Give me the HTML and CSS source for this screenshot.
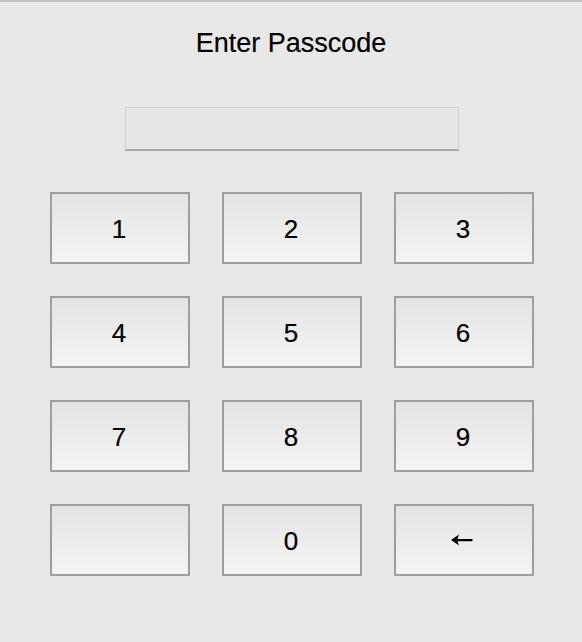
FILE: index.html
```html
<!DOCTYPE html>
<html>
<head>
<meta charset="utf-8">
<link rel="stylesheet" href="styles.css">
</head>
<body>
<div class="screen">
  <h1 class="title">Enter Passcode</h1>
  <div class="field-row"><div class="field"></div></div>
  <div class="pad">
    <button class="key">1</button>
    <button class="key">2</button>
    <button class="key">3</button>
    <button class="key">4</button>
    <button class="key">5</button>
    <button class="key">6</button>
    <button class="key">7</button>
    <button class="key">8</button>
    <button class="key">9</button>
    <button class="key"></button>
    <button class="key">0</button>
    <button class="key key-back" aria-label="Backspace"><svg class="arrow" width="22" height="12" viewBox="0 0 22 12"><path d="M0 6 L8 0.5 L6.5 5 H21.5 V7.2 H6.5 L8 11.5 Z" fill="#000"/></svg></button>
  </div>
</div>
</body>
</html>
```
FILE: styles.css
```css
html, body {
  margin: 0;
  padding: 0;
  background: #e8e8e8;
}
.screen {
  width: 582px;
  height: 642px;
  box-sizing: border-box;
  border-top: 2px solid #c4c4c4;
  font-family: "Liberation Sans", Arial, sans-serif;
  color: #000;
}
.title {
  margin: 26px 0 0 0;
  font-size: 27px;
  line-height: 30px;
  font-weight: normal;
  text-align: center;
  -webkit-text-stroke: 0.2px #000;
}
.field-row {
  display: flex;
  justify-content: center;
  padding-left: 1px;
  margin-top: 49px;
}
.field {
  width: 334px;
  height: 44px;
  box-sizing: border-box;
  border: 1px solid #cbcbcb;
  border-bottom: 2px solid #a9a9a9;
  background: #e7e7e7;
}
.pad {
  display: grid;
  grid-template-columns: repeat(3, 140px);
  grid-auto-rows: 72px;
  column-gap: 32px;
  row-gap: 32px;
  margin: 41px 0 0 50px;
}
.key {
  box-sizing: border-box;
  border: 2px solid #9e9e9e;
  border-radius: 0;
  background: linear-gradient(to bottom, #e3e3e3 0%, #ececec 50%, #f4f4f4 100%);
  font-family: "Liberation Sans", Arial, sans-serif;
  font-size: 26px;
  color: #000;
  -webkit-text-stroke: 0.2px #000;
  padding: 0 2px 0 0;
  padding-top: 2px;
  display: flex;
  align-items: center;
  justify-content: center;
}
.key-back {
  padding: 0 4px 0 0;
}
.arrow {
  display: block;
}
```
